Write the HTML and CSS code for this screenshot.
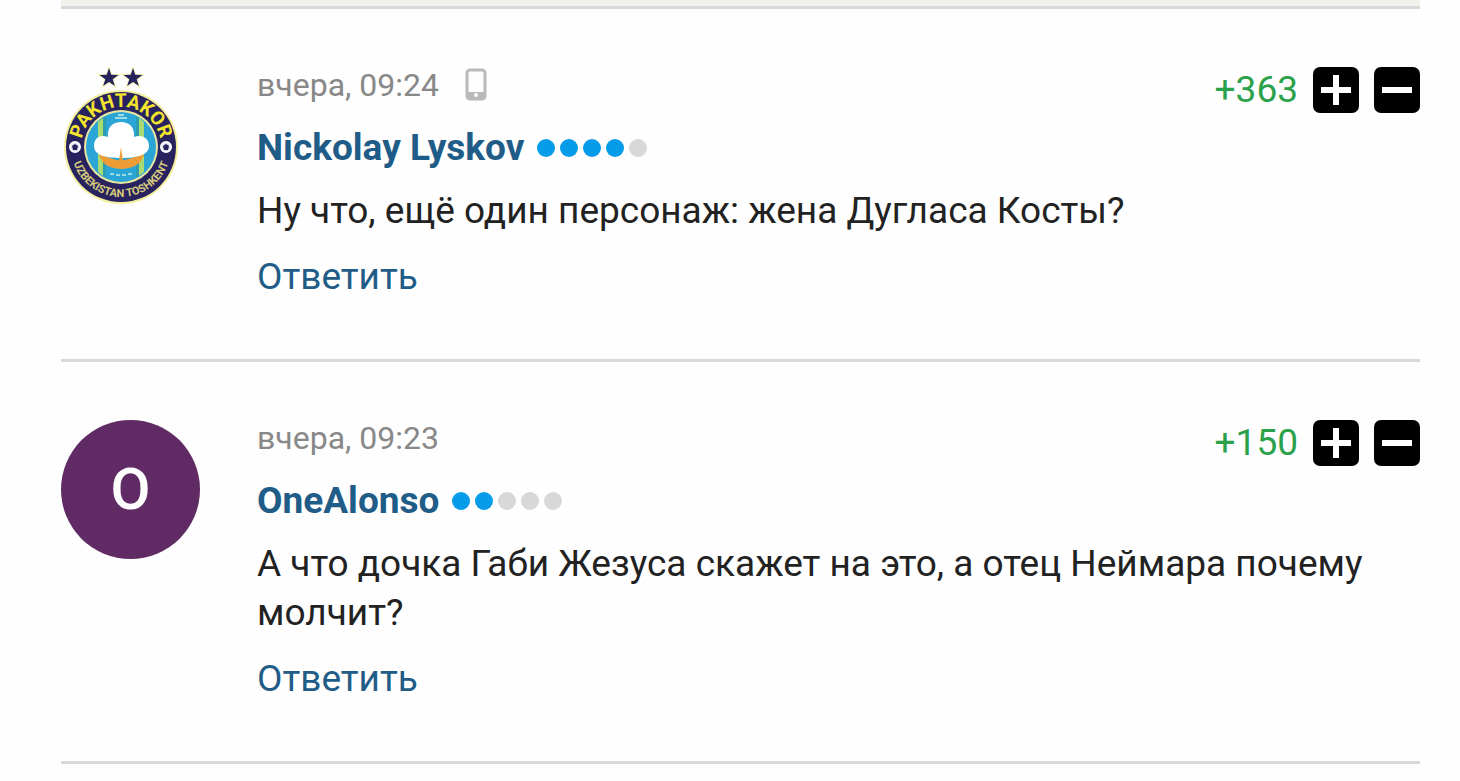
FILE: index.html
```html
<!DOCTYPE html>
<html lang="ru">
<head>
    <meta charset="UTF-8">
    <meta name="viewport" content="width=device-width, initial-scale=1.0">
    <title>Комментарии</title>
    <link rel="stylesheet" href="styles.css">
</head>
<body>
    <main class="comments">
        <div class="comments-top"></div>

        <article class="comment">
            <svg class="avatar" viewBox="0 0 139 139" role="img" aria-label="Pakhtakor">
                <defs>
                    <path id="arc-top" d="M20 80 A40 40 0 0 1 100 80"/>
                    <path id="arc-bottom" d="M10 80 A50 50 0 0 0 110 80"/>
                    <clipPath id="field"><circle cx="60" cy="80" r="34"/></clipPath>
                </defs>
                <g fill="#26235f" stroke="#f6f3b4" stroke-width="2" paint-order="stroke">
                    <path d="M48 1 L50.300 7.800 57.500 7.900 51.700 12.200 53.900 19 48 14.900 42.100 19 44.300 12.200 38.500 7.900 45.700 7.800Z"/>
                    <path d="M72 1 L74.300 7.800 81.500 7.900 75.700 12.200 77.900 19 72 14.900 66.100 19 68.300 12.200 62.500 7.900 69.700 7.800Z"/>
                </g>
                <circle cx="60" cy="80" r="57" fill="#f3ef9c"/>
                <circle cx="60" cy="80" r="55" fill="#28225f"/>
                <circle cx="60" cy="80" r="37" fill="#e8e6a0"/>
                <circle cx="60" cy="80" r="35" fill="#2aa5d6"/>
                <g clip-path="url(#field)">
                    <path d="M37 45h5v70h-5zM78 45h5v70h-5z" fill="#a8dc72"/>
                    <path d="M42 45h3v70h-3zM75 45h3v70h-3z" fill="#2c9cae"/>
                    <path d="M57 48h6M54 51h12M49 107h4M55 108h4M61 108h4M67 107h4" stroke="#9bdbe5" stroke-width="2"/>
                </g>
                <path d="M38 87 Q47 91 60 94 Q72 91 83 87 Q80 101 60 102 Q41 101 38 87Z" fill="#ee9d36"/>
                <path d="M47 70 C46 60 52 55 60 55 C68 55 74 60 73 70 C82 67 88 72 88 79 C88 88 76 91 60 91 C44 91 33 88 33 79 C33 72 38 67 47 70Z" fill="#fff"/>
                <path d="M60 80 L62 94H58Z" fill="#ee9d36"/>
                <g fill="#dcdcf0" stroke="#fff" stroke-width="2">
                    <circle cx="14" cy="80" r="5"/>
                    <circle cx="105" cy="80" r="5"/>
                </g>
                <path d="M14 77l3 2-1 4h-4l-1-4zM105 77l3 2-1 4h-4l-1-4z" fill="#28225f"/>
                <text class="crest-name"><textPath href="#arc-top" startOffset="50%">PAKHTAKOR</textPath></text>
                <text class="crest-city"><textPath href="#arc-bottom" startOffset="50%">UZBEKISTAN TOSHKENT</textPath></text>
            </svg>
            <div class="comment-body">
                <div class="comment-meta">
                    <time>вчера, 09:24</time>
                    <svg class="phone" viewBox="0 0 22 34" aria-hidden="true">
                        <rect x="2" y="2" width="18" height="29" rx="3" fill="none" stroke="#b9b9b9" stroke-width="3"/>
                        <path d="M3 24h16v6H3z" fill="#b9b9b9"/>
                        <circle cx="11" cy="27" r="2" fill="#fff"/>
                    </svg>
                </div>
                <div class="comment-author">
                    <a href="#">Nickolay Lyskov</a>
                    <span class="dots"><i class="on"></i><i class="on"></i><i class="on"></i><i class="on"></i><i></i></span>
                </div>
                <p class="comment-text">Ну что, ещё один персонаж: жена Дугласа Косты?</p>
                <a class="reply" href="#">Ответить</a>
            </div>
            <div class="vote">
                <span class="score">+363</span>
                <button class="vote-btn" type="button" aria-label="Плюс"><svg viewBox="0 0 46 46"><path d="M8 23h30M23 8v30"/></svg></button>
                <button class="vote-btn" type="button" aria-label="Минус"><svg viewBox="0 0 46 46"><path d="M8 23h30"/></svg></button>
            </div>
        </article>

        <article class="comment">
            <div class="avatar letter">O</div>
            <div class="comment-body">
                <div class="comment-meta">
                    <time>вчера, 09:23</time>
                </div>
                <div class="comment-author">
                    <a href="#">OneAlonso</a>
                    <span class="dots"><i class="on"></i><i class="on"></i><i></i><i></i><i></i></span>
                </div>
                <p class="comment-text">А что дочка Габи Жезуса скажет на это, а отец Неймара почему молчит?</p>
                <a class="reply" href="#">Ответить</a>
            </div>
            <div class="vote">
                <span class="score">+150</span>
                <button class="vote-btn" type="button" aria-label="Плюс"><svg viewBox="0 0 46 46"><path d="M8 23h30M23 8v30"/></svg></button>
                <button class="vote-btn" type="button" aria-label="Минус"><svg viewBox="0 0 46 46"><path d="M8 23h30"/></svg></button>
            </div>
        </article>
    </main>
</body>
</html>
```
FILE: styles.css
```css
* {
    box-sizing: border-box;
}
body {
    margin: 0;
    background: #fefefe;
    color: #222;
    font-family: Roboto, "Liberation Sans", sans-serif;
    font-size: 37px;
    line-height: 49px;
}
a {
    color: #1f5c87;
    text-decoration: none;
}
a:hover {
    text-decoration: underline;
}
.comments {
    padding: 0 40px 0 61px;
}
.comments-top {
    height: 9px;
    background: #f2f2ed;
    border-bottom: 3px solid #d8d8d8;
}
.comment {
    display: grid;
    grid-template-columns: 139px 1fr auto;
    column-gap: 57px;
    padding: 58px 0;
    border-bottom: 3px solid #d9d9d9;
}
.avatar {
    grid-column: 1;
    grid-row: 1;
    width: 139px;
    height: 139px;
}
.letter {
    display: flex;
    align-items: center;
    justify-content: center;
    border-radius: 50%;
    background: #602b64;
    color: #fff;
    font-size: 58px;
    font-weight: 500;
}
.crest-name,
.crest-city {
    font-weight: bold;
    text-anchor: middle;
}
.crest-name {
    fill: #f4e52c;
    font-size: 19px;
}
.crest-city {
    fill: #d6cb7c;
    font-size: 11px;
}
/* the text runs under the vote block, which only takes the first line */
.comment-body {
    grid-column: 2 / 4;
    grid-row: 1;
}
.comment-meta {
    display: flex;
    align-items: center;
    gap: 26px;
    height: 36px;
    color: #888;
    font-size: 32px;
}
.phone {
    width: 22px;
    height: 34px;
}
.comment-author {
    display: flex;
    align-items: center;
    gap: 13px;
    margin: 20px 0 14px;
    font-weight: bold;
}
.dots {
    display: flex;
    gap: 5px;
}
.dots i {
    width: 18px;
    height: 18px;
    border-radius: 50%;
    background: #d8d8d8;
}
.dots .on {
    background: #069ce9;
}
.comment-text {
    margin: 0 0 17px;
}
.reply {
    display: block;
    width: max-content;
}
.vote {
    grid-column: 3;
    grid-row: 1;
    align-self: start;
    display: flex;
    align-items: center;
    gap: 15px;
    line-height: 46px;
}
.score {
    color: #2ba14b;
}
.vote-btn {
    width: 46px;
    height: 46px;
    padding: 0;
    border: 0;
    border-radius: 7px;
    background: #000;
    cursor: pointer;
}
.vote-btn svg {
    display: block;
    stroke: #fff;
    stroke-width: 6;
}
```
